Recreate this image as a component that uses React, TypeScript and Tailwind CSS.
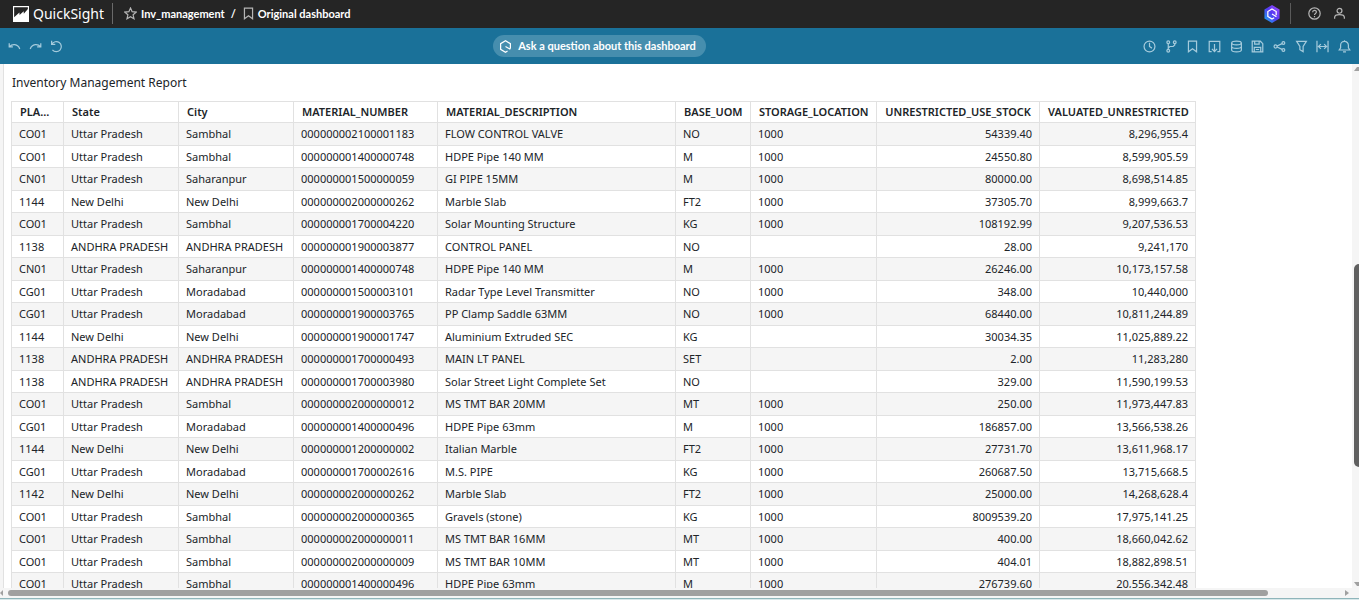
import type { ReactNode } from "react";

type Row = [string, string, string, string, string, string, string, string, string];

const UP = "Uttar Pradesh";
const ND = "New Delhi";
const AP = "ANDHRA PRADESH";

const rows: Row[] = [
  ["CO01", UP, "Sambhal", "000000002100001183", "FLOW CONTROL VALVE", "NO", "1000", "54339.40", "8,296,955.4"],
  ["CO01", UP, "Sambhal", "000000001400000748", "HDPE Pipe 140 MM", "M", "1000", "24550.80", "8,599,905.59"],
  ["CN01", UP, "Saharanpur", "000000001500000059", "GI PIPE 15MM", "M", "1000", "80000.00", "8,698,514.85"],
  ["1144", ND, ND, "000000002000000262", "Marble Slab", "FT2", "1000", "37305.70", "8,999,663.7"],
  ["CO01", UP, "Sambhal", "000000001700004220", "Solar Mounting Structure", "KG", "1000", "108192.99", "9,207,536.53"],
  ["1138", AP, AP, "000000001900003877", "CONTROL PANEL", "NO", "", "28.00", "9,241,170"],
  ["CN01", UP, "Saharanpur", "000000001400000748", "HDPE Pipe 140 MM", "M", "1000", "26246.00", "10,173,157.58"],
  ["CG01", UP, "Moradabad", "000000001500003101", "Radar Type Level Transmitter", "NO", "1000", "348.00", "10,440,000"],
  ["CG01", UP, "Moradabad", "000000001900003765", "PP Clamp Saddle 63MM", "NO", "1000", "68440.00", "10,811,244.89"],
  ["1144", ND, ND, "000000001900001747", "Aluminium Extruded SEC", "KG", "", "30034.35", "11,025,889.22"],
  ["1138", AP, AP, "000000001700000493", "MAIN LT PANEL", "SET", "", "2.00", "11,283,280"],
  ["1138", AP, AP, "000000001700003980", "Solar Street Light Complete Set", "NO", "", "329.00", "11,590,199.53"],
  ["CO01", UP, "Sambhal", "000000002000000012", "MS TMT BAR 20MM", "MT", "1000", "250.00", "11,973,447.83"],
  ["CG01", UP, "Moradabad", "000000001400000496", "HDPE Pipe 63mm", "M", "1000", "186857.00", "13,566,538.26"],
  ["1144", ND, ND, "000000001200000002", "Italian Marble", "FT2", "1000", "27731.70", "13,611,968.17"],
  ["CG01", UP, "Moradabad", "000000001700002616", "M.S. PIPE", "KG", "1000", "260687.50", "13,715,668.5"],
  ["1142", ND, ND, "000000002000000262", "Marble Slab", "FT2", "1000", "25000.00", "14,268,628.4"],
  ["CO01", UP, "Sambhal", "000000002000000365", "Gravels (stone)", "KG", "1000", "8009539.20", "17,975,141.25"],
  ["CO01", UP, "Sambhal", "000000002000000011", "MS TMT BAR 16MM", "MT", "1000", "400.00", "18,660,042.62"],
  ["CO01", UP, "Sambhal", "000000002000000009", "MS TMT BAR 10MM", "MT", "1000", "404.01", "18,882,898.51"],
  ["CO01", UP, "Sambhal", "000000001400000496", "HDPE Pipe 63mm", "M", "1000", "276739.60", "20,556,342.48"],
];

const columns = [
  { name: "PLA...", width: "w-[53px]" },
  { name: "State", width: "w-[115px]" },
  { name: "City", width: "w-[115px]" },
  { name: "MATERIAL_NUMBER", width: "w-[144px]" },
  { name: "MATERIAL_DESCRIPTION", width: "w-[238px]" },
  { name: "BASE_UOM", width: "w-[75px]" },
  { name: "STORAGE_LOCATION", width: "w-[126px]" },
  { name: "UNRESTRICTED_USE_STOCK", width: "w-[163px]" },
  { name: "VALUATED_UNRESTRICTED", width: "w-[156px]" },
];

function Icon({ children, className = "size-[13px]" }: { children: ReactNode; className?: string }) {
  return (
    <svg viewBox="0 0 16 16" className={className} fill="none" stroke="currentColor" strokeWidth="1.5" aria-hidden="true">
      {children}
    </svg>
  );
}

const bookmark = <path d="M3 1.5h10v13L8 10.7l-5 3.8z" />;

const undoTools: { label: string; art: ReactNode }[] = [
  { label: "Undo", art: <path d="M1.5 4v4.5H6M1.8 8.2C5 4.6 12 4.2 14.5 11" /> },
  { label: "Redo", art: <path d="M14.5 4v4.5H10M14.2 8.2C11 4.6 4 4.2 1.5 11" /> },
  { label: "Reset", art: <path d="M2 1v4.500h4.500M2.300 5.200A6.200 6.200 0 1 1 3 12.200" /> },
];

const tools: { label: string; art: ReactNode }[] = [
  { label: "Schedules", art: <><circle cx="8" cy="8" r="6.7" /><path d="M8 3.5V8l3 2" /></> },
  {
    label: "Versions",
    art: <><circle cx="4" cy="2.8" r="1.7" /><circle cx="4" cy="13.2" r="1.7" /><circle cx="12" cy="2.8" r="1.7" /><path d="M4 4.5v7M12 4.5V6l-2 2H6l-2 2" /></>,
  },
  { label: "Bookmarks", art: bookmark },
  { label: "Export", art: <path d="M4.5 14.3h-3V1.700h13v12.600h-3M8 5v9M4.800 11 8 14.200 11.200 11" /> },
  {
    label: "Data",
    art: <><ellipse cx="8" cy="3.6" rx="6" ry="2.3" /><path d="M2 3.6v8.8c0 1.2 2.7 2.3 6 2.3s6-1.1 6-2.3V3.6M2 8c0 1.2 2.7 2.3 6 2.3S14 9.2 14 8" /></>,
  },
  { label: "Save", art: <path d="M1.5 1.5h10l3 3v10h-13zM4.5 1.5V5H10V1.5M4 14.5V9h8v5.500M6 11.700h4" /> },
  {
    label: "Share",
    art: <><circle cx="3.2" cy="8" r="1.9" /><circle cx="12.8" cy="3.8" r="1.7" /><circle cx="12.8" cy="12.2" r="1.7" /><path d="m5 7.3 6.2-2.8M5 8.7l6.2 2.8" /></>,
  },
  { label: "Filters", art: <path d="M2 1.7h12L10 8v6.3L6 12V8z" /> },
  { label: "Fit width", art: <path d="M1.2 1v14M14.8 1v14M3.2 8h9.6M6 5 3 8l3 3M10 5l3 3-3 3" /> },
  { label: "Notifications", art: <path d="M1.5 12.3h13L12.8 9.5v-3a4.8 4.8 0 0 0-9.6 0v3zM6.2 14.7h3.6M8 .3v1.5" /> },
];

function TopBar() {
  return (
    <header className="flex h-7 shrink-0 items-center bg-[#252525] px-[13px] pb-px text-white">
      <a href="#home" className="flex items-center gap-1">
        <svg viewBox="0 0 17 17" className="size-4" aria-hidden="true">
          <path fill="#fff" d="M0 0h17v17H0z" />
          <path fill="#252525" d="M1.2 1.2h14.6v2L11.5 8.3 11.3 5.5 7 9.5 6.8 6.8 1.2 12z" />
        </svg>
        <span className="text-sm leading-5">QuickSight</span>
      </a>
      <span className="ml-2 h-[21px] w-px bg-[#6a6a6a]" />
      <nav aria-label="Breadcrumb" className="ml-[11px] flex items-center font-[Lato,sans-serif] text-[11px] leading-4 font-bold">
        <button type="button" aria-label="Favorite" className="mr-1 text-[#b5b5b5]">
          <Icon>
            <path d="m8 1.3 2 4.5 4.900.5-3.700 3.300 1.100 4.900L8 12l-4.300 2.500 1.100-4.900L1.100 6.300 6 5.800z" />
          </Icon>
        </button>
        <a href="#analysis">Inv_management</a>
        <span className="mx-1.5">/</span>
        <span className="mr-[3px] text-[#b5b5b5]"><Icon>{bookmark}</Icon></span>
        <a href="#dashboard">Original dashboard</a>
      </nav>
      <div className="ml-auto flex items-center">
        <button type="button" aria-label="Amazon Q">
          <svg viewBox="0 0 18 20" className="h-[18px] w-4" aria-hidden="true">
            <defs>
              <linearGradient id="q" x1="1" y1="0" x2="0" y2="1">
                <stop offset="0" stopColor="#a54bff" />
                <stop offset=".5" stopColor="#5438f0" />
                <stop offset="1" stopColor="#13b9f5" />
              </linearGradient>
            </defs>
            <path fill="url(#q)" d="M9 0l8.5 4.8v10.4L9 20 .5 15.2V4.800z" />
            <path fill="none" stroke="#fff" strokeWidth="1.4" d="M11.5 14.2 9 15.600l-4.700-2.800V7.200L9 4.400l4.700 2.800v4.300M9 10l5 3" />
          </svg>
        </button>
        <span className="mr-[17px] ml-[10px] h-[21px] w-px bg-[#5a5a5a]" />
        <button type="button" aria-label="Help" className="mr-3 text-[#b5b5b5]">
          <Icon>
            <circle cx="8" cy="8" r="7" />
            <path d="M5.7 6.5C5.7 3.3 10.3 3.5 10.3 6.2 10.3 8 8 7.8 8 9.8M8 11v1.5" />
          </Icon>
        </button>
        <button type="button" aria-label="Account" className="text-[#b5b5b5]">
          <Icon>
            <circle cx="8" cy="4.7" r="3" />
            <path d="M2 14.5V13c0-3 2.500-3.500 6-3.500s6 .500 6 3.500v1.500" />
          </Icon>
        </button>
      </div>
    </header>
  );
}

function ToolBar() {
  return (
    <div className="grid h-9 shrink-0 grid-cols-[1fr_auto_1fr] items-center bg-[#1a7199] px-2 text-[#a5cbdc]">
      <div className="flex gap-2">
        {undoTools.map((t) => (
          <button key={t.label} type="button" aria-label={t.label}>
            <Icon>{t.art}</Icon>
          </button>
        ))}
      </div>
      <button type="button" className="mr-40 flex h-[22px] items-center gap-1.5 rounded-full bg-[#468eae] pr-2.5 pl-1.5 font-[Lato,sans-serif] text-[11px] leading-4 font-bold text-white">
        <Icon>
          <path d="M10.5 13.6 8 15l-6-3.500v-7L8 1l6 3.500v6M8 8l6 3.500" />
        </Icon>
        Ask a question about this dashboard
      </button>
      <div className="flex w-52 justify-between justify-self-end">
        {tools.map((t) => (
          <button key={t.label} type="button" aria-label={t.label}>
            <Icon>{t.art}</Icon>
          </button>
        ))}
      </div>
    </div>
  );
}

function ReportTable() {
  return (
    <table className="w-[1185px] table-fixed border-separate border-spacing-0 text-[11px] leading-4 text-[#202428]">
      <thead>
        <tr className="h-[22px]">
          {columns.map((c, i) => (
            <th
              key={c.name}
              scope="col"
              className={`border-y border-r border-[#e1e1e1] px-2 py-0 font-semibold whitespace-nowrap first:border-l ${c.width} ${i > 6 ? "text-right" : "text-left"}`}
            >
              {c.name}
            </th>
          ))}
        </tr>
      </thead>
      <tbody>
        {rows.map((row, r) => (
          <tr key={r} className="h-[22px] odd:h-[23px] odd:bg-[#f5f5f5]">
            {row.map((cell, i) => (
              <td
                key={i}
                className={`border-r border-b border-[#e1e1e1] px-[7px] py-0 whitespace-nowrap first:border-l ${i > 6 ? "text-right" : "text-left"}`}
              >
                {cell}
              </td>
            ))}
          </tr>
        ))}
      </tbody>
    </table>
  );
}

export default function App() {
  return (
    <div className="flex h-screen flex-col overflow-hidden bg-white font-['Noto_Sans',sans-serif]">
      <TopBar />
      <ToolBar />
      <div className="flex min-h-0 flex-1">
        <div className="w-1 border-r border-[#e1e1e1] bg-[#f5f5f5]" />
        <main className="min-w-0 flex-1 overflow-hidden pl-[7px]">
          <h1 className="pt-[9px] pb-2 pl-px text-xs leading-5 text-[#202428]">Inventory Management Report</h1>
          <ReportTable />
        </main>
        <div className="flex w-[7px] flex-col items-end overflow-hidden bg-[#f5f5f5] text-[#a0a0a0]">
          <svg viewBox="0 0 5 7" className="h-[7px] w-[5px]" aria-hidden="true"><path fill="currentColor" d="M0 7l3-4h2v4z" /></svg>
          <div className="grow-[193] basis-0" />
          <div className="w-[5px] grow-[203] basis-0 rounded-l-full bg-[#606060]" />
          <div className="grow-[114] basis-0" />
          <svg viewBox="0 0 5 7" className="h-[7px] w-[5px]" aria-hidden="true"><path fill="currentColor" d="M0 1h5v4H3z" /></svg>
        </div>
      </div>
      <div className="flex h-[10px] shrink-0 items-center bg-[#f5f5f5] text-[#a0a0a0]">
        <svg viewBox="0 0 8 8" className="size-2" aria-hidden="true"><path fill="currentColor" d="M3 1v6L0 4z" /></svg>
        <div className="h-1.5 grow-[1260] basis-0 rounded-full bg-[#a0a0a0]" />
        <div className="grow-[75] basis-0" />
        <svg viewBox="0 0 16 8" className="h-2 w-4" aria-hidden="true"><path fill="currentColor" d="M2 1v6l4-3z" /></svg>
      </div>
      <div className="h-0.5 shrink-0 border-t border-[#8fb5ba] bg-[#d8e8ea]" />
    </div>
  );
}
